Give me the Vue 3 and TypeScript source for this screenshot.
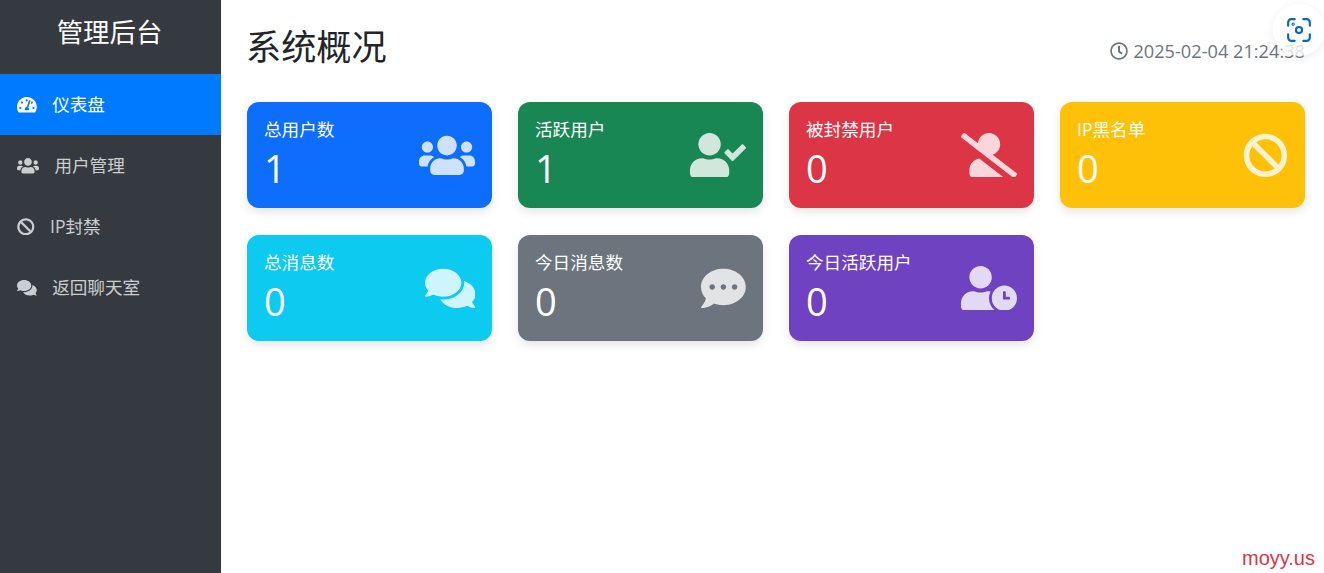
<script setup lang="ts">
const icons = {
  gauge: { box: '0 0 576 512', d: 'M288 32C128.94 32 0 160.94 0 320c0 52.8 14.25 102.26 39.06 144.8 5.61 9.62 16.3 15.2 27.44 15.2h443c11.14 0 21.83-5.58 27.44-15.2C561.75 422.26 576 372.8 576 320c0-159.06-128.94-288-288-288zm0 64c14.71 0 26.58 10.13 30.32 23.65-1.11 2.26-2.64 4.23-3.45 6.67l-9.22 27.67c-5.13 3.49-10.97 6.01-17.64 6.01-17.67 0-32-14.33-32-32S270.33 96 288 96zM96 384c-17.67 0-32-14.33-32-32s14.33-32 32-32 32 14.33 32 32-14.33 32-32 32zm48-160c-17.67 0-32-14.33-32-32s14.33-32 32-32 32 14.33 32 32-14.33 32-32 32zm246.77-72.41l-61.33 184C343.13 347.33 352 364.54 352 384c0 11.72-3.38 22.55-8.88 32H232.88c-5.5-9.45-8.88-20.28-8.88-32 0-33.94 26.5-61.43 59.9-63.59l61.34-184.01c4.17-12.56 17.73-19.45 30.36-15.17 12.57 4.19 19.35 17.79 15.17 30.36zm14.66 57.2l15.52-46.55c3.47-1.29 7.13-2.23 11.05-2.23 17.67 0 32 14.33 32 32s-14.33 32-32 32c-11.38-.01-20.89-6.28-26.57-15.22zM480 384c-17.67 0-32-14.33-32-32s14.33-32 32-32 32 14.33 32 32-14.33 32-32 32z' },
  users: { box: '0 0 640 512', d: 'M96 224c35.3 0 64-28.7 64-64s-28.7-64-64-64-64 28.7-64 64 28.7 64 64 64zm448 0c35.3 0 64-28.7 64-64s-28.7-64-64-64-64 28.7-64 64 28.7 64 64 64zm32 32h-64c-17.6 0-33.5 7.1-45.1 18.6 40.3 22.1 68.9 62 75.1 109.4h66c17.7 0 32-14.3 32-32v-32c0-35.3-28.7-64-64-64zm-256 0c61.9 0 112-50.1 112-112S381.9 32 320 32 208 82.1 208 144s50.1 112 112 112zm76.8 32h-8.3c-20.8 10-43.9 16-68.5 16s-47.6-6-68.5-16h-8.3C179.6 288 128 339.6 128 403.2V432c0 26.5 21.5 48 48 48h288c26.5 0 48-21.5 48-48v-28.8c0-63.6-51.6-115.2-115.2-115.2zm-223.7-13.4C161.5 263.1 145.6 256 128 256H64c-35.3 0-64 28.7-64 64v32c0 17.7 14.3 32 32 32h65.9c6.3-47.4 34.9-87.3 75.2-109.4z' },
  ban: { box: '0 0 512 512', d: 'M256 8C119.034 8 8 119.033 8 256s111.034 248 248 248 248-111.034 248-248S392.967 8 256 8zm130.108 117.892c65.448 65.448 70 165.481 20.677 235.637L150.47 105.216c70.204-49.356 170.226-44.735 235.638 20.676zM125.892 386.108c-65.448-65.448-70-165.481-20.677-235.637L361.53 406.784c-70.203 49.356-170.226 44.736-235.638-20.676z' },
  comments: { box: '0 0 576 512', d: 'M416 192c0-88.4-93.1-160-208-160S0 103.6 0 192c0 34.3 14.1 65.9 38 92-13.4 30.2-35.5 54.2-35.8 54.5-2.2 2.3-2.8 5.7-1.5 8.7S4.8 352 8 352c36.6 0 66.9-12.3 88.7-25 32.2 15.7 70.3 25 111.3 25 114.9 0 208-71.6 208-160zm122 220c23.9-26 38-57.7 38-92 0-66.9-53.5-124.2-129.3-148.1.9 6.6 1.3 13.3 1.3 20.1 0 105.9-107.7 192-240 192-10.8 0-21.3-.8-31.7-1.9C207.8 439.6 281.8 480 368 480c41 0 79.1-9.2 111.3-25 21.8 12.7 52.1 25 88.7 25 3.2 0 6.1-1.9 7.3-4.8 1.3-2.9.7-6.3-1.5-8.7-.3-.3-22.4-24.2-35.8-54.5z' },
  userCheck: { box: '0 0 640 512', d: 'M224 256c70.7 0 128-57.3 128-128S294.7 0 224 0 96 57.3 96 128s57.3 128 128 128zm89.6 32h-16.7c-22.2 10.2-46.9 16-72.9 16s-50.6-5.8-72.9-16h-16.7C60.2 288 0 348.2 0 422.4V464c0 26.5 21.5 48 48 48h352c26.5 0 48-21.5 48-48v-41.6c0-74.2-60.2-134.4-134.4-134.4zm323-128.4l-27.8-28.1c-4.6-4.7-12.1-4.7-16.8-.1l-104.8 104-45.5-45.8c-4.6-4.7-12.1-4.7-16.8-.1l-28.1 27.9c-4.7 4.6-4.7 12.1-.1 16.8l81.7 82.3c4.6 4.7 12.1 4.7 16.8.1l141.3-140.2c4.6-4.7 4.7-12.2.1-16.8z' },
  userSlash: { box: '0 0 640 512', d: 'M633.8 458.1L362.3 248.3C412.1 230.7 448 183.8 448 128 448 57.3 390.7 0 320 0c-67.1 0-121.5 51.8-126.9 117.4L45.5 3.4C38.5-2 28.5-.8 23 6.2L3.4 31.4c-5.4 7-4.2 17 2.8 22.4l588.4 454.7c7 5.4 17 4.2 22.5-2.8l19.6-25.3c5.4-6.8 4.1-16.9-2.9-22.3zM96 422.4V464c0 26.5 21.5 48 48 48h350.2L207.4 290.3C144.2 301.3 96 356 96 422.4z' },
  commentDots: { box: '0 0 512 512', d: 'M256 32C114.6 32 0 125.1 0 240c0 49.6 21.4 95 57 130.7C44.5 421.1 2.7 466 2.2 466.5c-2.2 2.3-2.8 5.7-1.5 8.7S4.8 480 8 480c66.3 0 116-31.8 140.6-51.4 32.7 12.3 69 19.4 107.4 19.4 141.4 0 256-93.1 256-208S397.4 32 256 32zM128 272c-17.7 0-32-14.3-32-32s14.3-32 32-32 32 14.3 32 32-14.3 32-32 32zm128 0c-17.7 0-32-14.3-32-32s14.3-32 32-32 32 14.3 32 32-14.3 32-32 32zm128 0c-17.7 0-32-14.3-32-32s14.3-32 32-32 32 14.3 32 32-14.3 32-32 32z' },
  userClock: { box: '0 0 640 512', d: 'M496 224c-79.6 0-144 64.4-144 144s64.4 144 144 144 144-64.4 144-144-64.4-144-144-144zm64 150.3c0 5.3-4.4 9.7-9.7 9.7h-60.6c-5.3 0-9.7-4.4-9.7-9.7v-76.6c0-5.3 4.4-9.7 9.7-9.7h12.6c5.3 0 9.7 4.4 9.7 9.7V352h38.3c5.3 0 9.7 4.4 9.7 9.7v12.6zM320 368c0-27.8 6.7-54.1 18.2-77.5-8-1.5-16.2-2.5-24.6-2.5h-16.7c-22.2 10.2-46.9 16-72.9 16s-50.6-5.8-72.9-16h-16.7C60.2 288 0 348.2 0 422.4V464c0 26.5 21.5 48 48 48h347.1c-45.3-31.9-75.1-84.5-75.1-144zm-96-112c70.7 0 128-57.3 128-128S294.7 0 224 0 96 57.3 96 128s57.3 128 128 128z' },
  clock: { box: '0 0 512 512', d: 'M256 8C119 8 8 119 8 256s111 248 248 248 248-111 248-248S393 8 256 8zm0 448c-110.5 0-200-89.5-200-200S145.5 56 256 56s200 89.5 200 200-89.5 200-200 200zm61.8-104.4l-84.9-61.7c-3.1-2.3-4.9-5.9-4.9-9.7V116c0-6.6 5.4-12 12-12h32c6.6 0 12 5.4 12 12v141.7l66.8 48.6c5.4 3.9 6.5 11.4 2.6 16.8L334.6 349c-3.9 5.3-11.4 6.5-16.8 2.6z' },
}

const nav = [
  { label: '仪表盘', icon: icons.gauge, active: true },
  { label: '用户管理', icon: icons.users, active: false },
  { label: 'IP封禁', icon: icons.ban, active: false },
  { label: '返回聊天室', icon: icons.comments, active: false },
]

const cards = [
  { label: '总用户数', value: 1, color: 'blue', icon: icons.users },
  { label: '活跃用户', value: 1, color: 'green', icon: icons.userCheck },
  { label: '被封禁用户', value: 0, color: 'red', icon: icons.userSlash },
  { label: 'IP黑名单', value: 0, color: 'yellow', icon: icons.ban },
  { label: '总消息数', value: 0, color: 'cyan', icon: icons.comments },
  { label: '今日消息数', value: 0, color: 'gray', icon: icons.commentDots },
  { label: '今日活跃用户', value: 0, color: 'purple', icon: icons.userClock },
]
</script>

<template>
  <div class="layout">
    <aside class="sidebar">
      <div class="brand">管理后台</div>
      <a v-for="item in nav" :key="item.label" class="nav-link" :class="{ active: item.active }">
        <svg class="nav-icon" :viewBox="item.icon.box" fill="currentColor"><path :d="item.icon.d" /></svg>
        <span>{{ item.label }}</span>
      </a>
    </aside>

    <main class="main">
      <header class="top">
        <h2 class="title">系统概况</h2>
        <div class="time">
          <svg class="time-icon" :viewBox="icons.clock.box" fill="currentColor"><path :d="icons.clock.d" /></svg>
          <span>2025-02-04 21:24:38</span>
        </div>
      </header>

      <section class="cards">
        <div v-for="card in cards" :key="card.label" class="card" :class="card.color">
          <div class="card-text">
            <div class="card-label">{{ card.label }}</div>
            <div class="card-value">{{ card.value }}</div>
          </div>
          <svg class="card-icon" :viewBox="card.icon.box" fill="currentColor"><path :d="card.icon.d" /></svg>
        </div>
      </section>
    </main>

    <!-- floating scan button, sits over the clock -->
    <div class="scan">
      <svg viewBox="0 0 24 24" width="26" height="26" fill="none" stroke="#0b66c3" stroke-width="2" stroke-linecap="round">
        <path d="M2 8V5a3 3 0 0 1 3-3h3M16 2h3a3 3 0 0 1 3 3v3M22 16v3a3 3 0 0 1-3 3h-3M8 22H5a3 3 0 0 1-3-3v-3" />
        <circle cx="12" cy="12" r="2.8" />
        <circle cx="6.6" cy="6.6" r="0.5" />
      </svg>
    </div>
    <div class="mark">moyy.us</div>
  </div>
</template>

<style>
html, body {
  margin: 0;
  background: #fff;
  overflow: hidden;
}
</style>

<style scoped>
.layout {
  display: flex;
  height: 573px;
  font-family: "Open Sans", "Noto Sans CJK SC", sans-serif;
  color: #212529;
}

.sidebar {
  width: 221px;
  flex: none;
  background: #343a40;
}

.brand {
  height: 74px;
  padding: 13px 2px 0 0;
  box-sizing: border-box;
  text-align: center;
  font-size: 26.4px;
  line-height: 38px;
  color: #fff;
}

.nav-link {
  display: flex;
  align-items: center;
  gap: 15.4px;
  height: 61px;
  padding-left: 17px;
  font-size: 17.6px;
  line-height: 24px;
  color: rgba(255, 255, 255, 0.75);
}

.nav-link span {
  margin-top: -2px;
}

.nav-link.active {
  background: #007bff;
  color: #fff;
}

.nav-icon {
  height: 17.6px;
  width: auto;
  flex: none;
}

.main {
  flex: 1;
  padding: 0 19px 0 26px;
}

.top {
  display: flex;
  justify-content: space-between;
  align-items: center;
  height: 102px;
  padding-bottom: 10px;
  box-sizing: border-box;
}

.title {
  margin: 0 0 0 -1px;
  font-size: 35.2px;
  font-weight: 400;
  line-height: 1.2;
}

.time {
  display: flex;
  align-items: center;
  gap: 5px;
  margin-top: 10px;
  font-size: 18.2px;
  color: #6c757d;
}

.time-icon {
  height: 18px;
  width: 18px;
}

.cards {
  display: grid;
  grid-template-columns: repeat(4, 245px);
  grid-auto-rows: 106px;
  column-gap: 26px;
  row-gap: 27px;
}

.card {
  display: flex;
  align-items: center;
  justify-content: space-between;
  padding: 0 17px;
  border-radius: 12px;
  color: #fff;
  box-shadow: 0 4px 10px rgba(0, 0, 0, 0.1);
}

.card-text {
  padding-top: 2px;
}

.card-label {
  font-size: 17.6px;
  line-height: 26px;
  margin-top: -4px;
  margin-bottom: 2px;
}

.card-value {
  font-size: 38px;
  line-height: 48px;
}

.card-icon {
  height: 44.8px;
  width: auto;
  flex: none;
  opacity: 0.8;
}

.blue { background: #0d6efd; }
.green { background: #198754; }
.red { background: #dc3545; }
.yellow { background: #ffc107; }
.cyan { background: #0dcaf0; }
.gray { background: #6c757d; }
.purple { background: #6f42c1; }

.scan {
  position: absolute;
  top: 4px;
  right: -1px;
  width: 52px;
  height: 52px;
  border-radius: 50%;
  background: rgba(255, 255, 255, 0.8);
  box-shadow: 0 2px 8px rgba(0, 0, 0, 0.08);
  display: flex;
  align-items: center;
  justify-content: center;
}

.mark {
  position: absolute;
  right: 9px;
  bottom: 3px;
  font-family: "Liberation Sans", sans-serif;
  font-size: 20px;
  color: #dc3545;
}
</style>
